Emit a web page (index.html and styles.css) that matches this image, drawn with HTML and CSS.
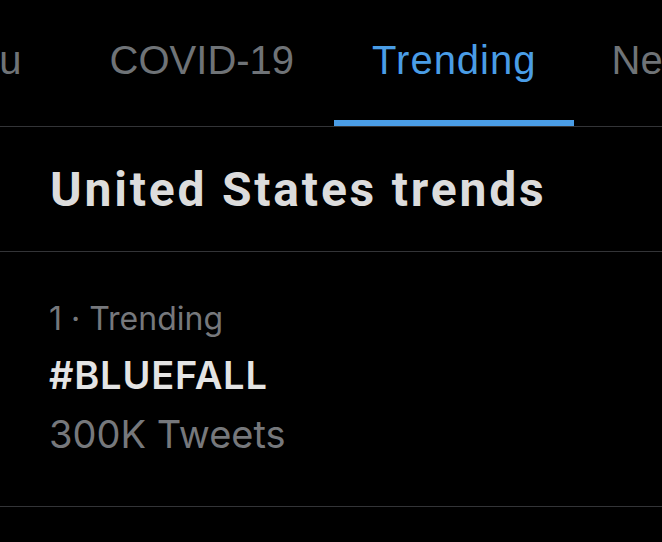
FILE: index.html
```html
<!DOCTYPE html>
<html lang="en">
<head>
<meta charset="utf-8">
<title>Trending</title>
<link rel="stylesheet" href="styles.css">
</head>
<body>
<div class="screen">
  <nav class="tabs">
    <div class="tab-strip">
      <div class="tab first">For you</div>
      <div class="tab">COVID-19</div>
      <div class="tab active">Trending</div>
      <div class="tab">News</div>
      <div class="tab">Sports</div>
    </div>
  </nav>
  <header class="section-head">
    <h1 class="section-title">United States trends</h1>
  </header>
  <div class="trend">
    <div class="trend-meta">1 · Trending</div>
    <div class="trend-name">#BLUEFALL</div>
    <div class="trend-count">300K Tweets</div>
  </div>
</div>
</body>
</html>
```
FILE: styles.css
```css
html, body {
  margin: 0;
  padding: 0;
  background: #000;
}
.screen {
  width: 662px;
  height: 542px;
  overflow: hidden;
  background: #000;
}
.tabs {
  border-bottom: 1px solid #333437;
  overflow: hidden;
}
.tab-strip {
  display: flex;
  margin-left: -152px;
  width: max-content;
}
.tab {
  font-family: "Liberation Sans", Arial, sans-serif;
  font-size: 40px;
  line-height: 40px;
  color: #6f7377;
  padding: 40px 38px 40px;
  border-bottom: 6px solid transparent;
  white-space: nowrap;
}
.tab.first {
  padding-right: 50px;
}
.tab.active {
  color: #4a9de6;
  border-bottom-color: #4a9de6;
  margin-left: 2px;
  padding-left: 38px;
  padding-right: 37px;
  letter-spacing: 1px;
}
.section-head {
  padding: 39px 50px 37px;
  border-bottom: 1px solid #333437;
}
.section-title {
  margin: 0;
  font-family: Roboto, "Liberation Sans", sans-serif;
  font-weight: 700;
  font-size: 48px;
  line-height: 48px;
  letter-spacing: 2.8px;
  color: #dcdcdc;
}
.trend {
  display: flex;
  flex-direction: column;
  gap: 14px;
  padding: 47px 49px 49px;
  border-bottom: 1px solid #333437;
  font-family: Inter, "Noto Sans", sans-serif;
}
.trend-meta {
  font-size: 32px;
  line-height: 40px;
  color: #76787c;
}
.trend-name {
  font-size: 38px;
  line-height: 44px;
  font-weight: 600;
  letter-spacing: 0.8px;
  color: #e4e4e4;
}
.trend-count {
  font-size: 38px;
  line-height: 46px;
  color: #76787c;
}
```
